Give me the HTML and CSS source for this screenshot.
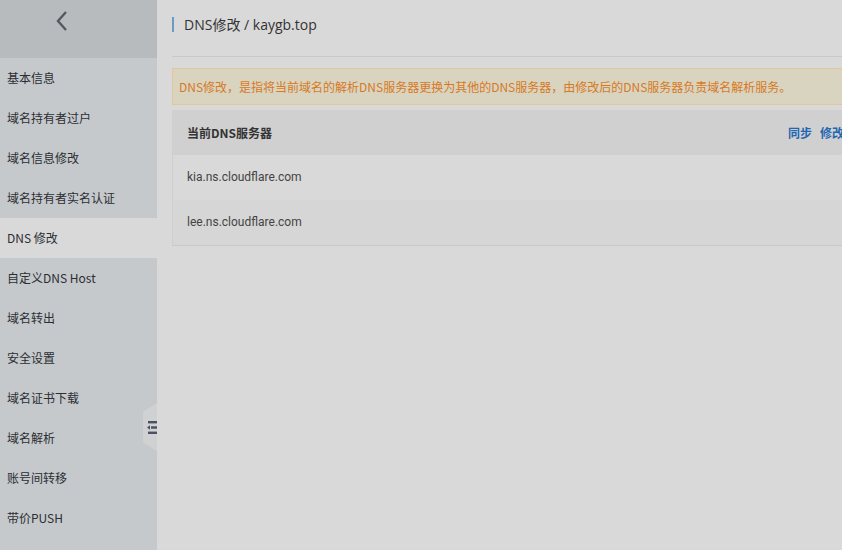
FILE: index.html
```html
<!DOCTYPE html>
<html lang="zh">
<head>
<meta charset="utf-8">
<title>DNS修改</title>
<link rel="stylesheet" href="styles.css">
</head>
<body>
<div class="app">
  <aside class="sidebar">
    <div class="side-top">
      <svg class="back" width="14" height="22" viewBox="0 0 14 22"><path d="M11 2 L3 11 L11 20" fill="none" stroke="#555a60" stroke-width="2.4"/></svg>
    </div>
    <ul class="menu">
      <li>基本信息</li>
      <li>域名持有者过户</li>
      <li>域名信息修改</li>
      <li>域名持有者实名认证</li>
      <li class="active">DNS 修改</li>
      <li>自定义DNS Host</li>
      <li>域名转出</li>
      <li>安全设置</li>
      <li>域名证书下载</li>
      <li>域名解析</li>
      <li>账号间转移</li>
      <li>带价PUSH</li>
      <li></li>
    </ul>
    <div class="collapse">
      <svg width="10" height="13" viewBox="0 0 10 13"><rect x="1" y="0" width="9" height="2.4" fill="#4b5160"/><rect x="4" y="5.3" width="6" height="2.4" fill="#4b5160"/><path d="M0 6.5 L3 4.2 L3 8.8 Z" fill="#4b5160"/><rect x="1" y="10.6" width="9" height="2.4" fill="#4b5160"/></svg>
    </div>
  </aside>
  <main class="main">
    <div class="page-head">
      <span class="head-bar"></span>
      <h1 class="title">DNS修改 / kaygb.top</h1>
    </div>
    <div class="alert">DNS修改，是指将当前域名的解析DNS服务器更换为其他的DNS服务器，由修改后的DNS服务器负责域名解析服务。</div>
    <div class="table">
      <div class="thead">
        <span class="th">当前DNS服务器</span>
        <span class="actions"><a>同步</a><a>修改</a></span>
      </div>
      <div class="row">kia.ns.cloudflare.com</div>
      <div class="row alt">lee.ns.cloudflare.com</div>
    </div>
  </main>
</div>
</body>
</html>
```
FILE: styles.css
```css
html, body {
  margin: 0;
  padding: 0;
  height: 100%;
  overflow: hidden;
  background: #d9d9d9;
}
body {
  font-family: "Noto Sans CJK SC", "Liberation Sans", sans-serif;
  font-size: 12px;
  color: #333;
}
.app {
  display: flex;
  width: 858px;
  height: 550px;
}
.sidebar {
  position: relative;
  width: 157px;
  flex: none;
  background: #c6c9cc;
  display: flex;
  flex-direction: column;
  overflow: hidden;
}
.side-top {
  flex: none;
  height: 58px;
  background: #b8bbbe;
  display: flex;
  padding: 10px 0 0 55px;
  box-sizing: border-box;
}
.back { display: block; }
.menu {
  flex: none;
  list-style: none;
  margin: 0;
  padding: 0;
}
.menu li {
  height: 40px;
  line-height: 40px;
  padding-left: 7px;
  color: #2b2e33;
  font-size: 12px;
}
.menu li.active {
  background: #d9d9d9;
}
.collapse {
  position: absolute;
  right: 0;
  top: 403px;
  width: 14px;
  height: 48px;
  background: #cfd1d3;
  clip-path: polygon(100% 0, 100% 100%, 0 82%, 0 18%);
  display: flex;
  align-items: center;
  justify-content: flex-end;
}
.collapse svg { display: block; }
.main {
  flex: 1;
  padding: 0 0 0 15px;
}
.page-head {
  height: 57px;
  border-bottom: 1px solid #c9c9c9;
  display: flex;
  align-items: center;
  box-sizing: border-box;
  padding-bottom: 8px;
}
.head-bar {
  width: 2px;
  height: 15px;
  background: #6f9ac0;
  margin-right: 10px;
}
.title {
  margin: 0;
  font-family: "Open Sans", "Noto Sans CJK SC", sans-serif;
  font-weight: normal;
  font-size: 14px;
  color: #333;
}
.alert {
  margin-top: 11px;
  height: 37px;
  box-sizing: border-box;
  border: 1px solid #e3c79b;
  background: #d9d4c0;
  color: #d7791f;
  font-size: 12px;
  line-height: 35px;
  padding-left: 6px;
  white-space: nowrap;
}
.table {
  margin-top: 5px;
  border-left: 1px solid #cfcfcf;
  border-bottom: 1px solid #c9c9c9;
}
.thead {
  height: 45px;
  background: #d0d0d0;
  display: flex;
  align-items: center;
  justify-content: space-between;
  padding: 0 14px;
}
.th {
  font-weight: bold;
  color: #333;
}
.actions a {
  color: #1f67b0;
  font-weight: bold;
  margin-left: 8px;
}
.row {
  height: 45px;
  line-height: 45px;
  padding-left: 14px;
  font-family: "Roboto", "Liberation Sans", sans-serif;
  color: #444;
  background: #d9d9d9;
}
.row.alt {
  background: #d6d6d6;
}
```
